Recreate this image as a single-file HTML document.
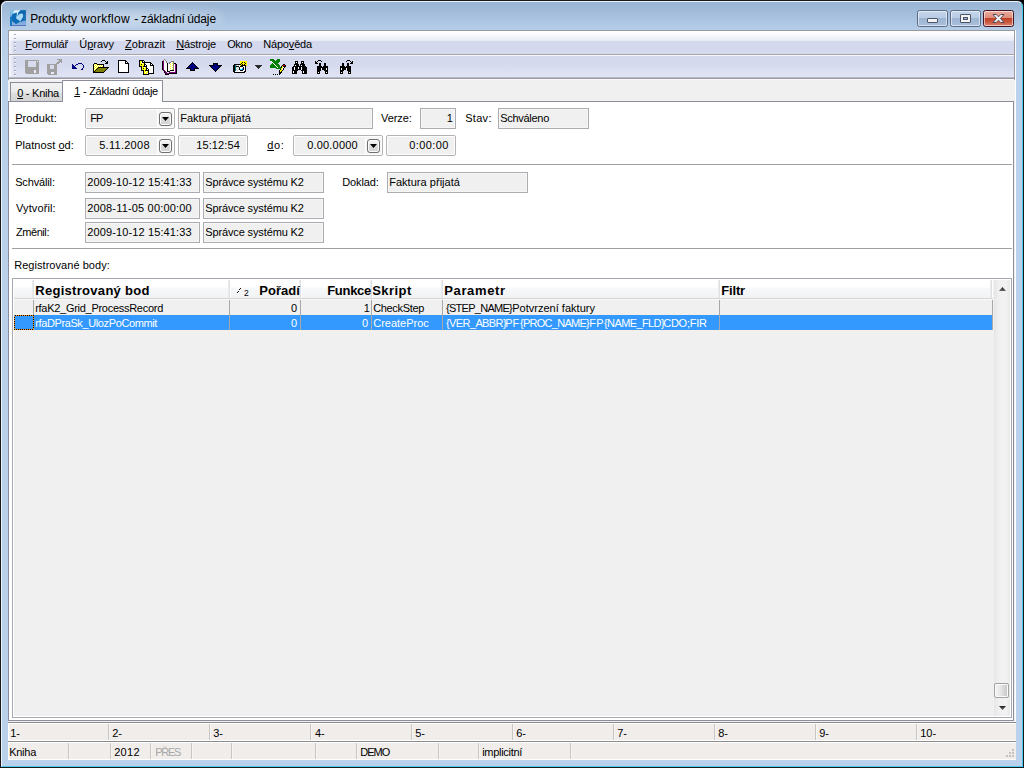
<!DOCTYPE html>
<html lang="cs">
<head>
<meta charset="utf-8">
<title>Produkty workflow - základní údaje</title>
<style>
*{box-sizing:border-box;margin:0;padding:0}
html,body{width:1024px;height:768px;overflow:hidden;background:#000}
body{font-family:"Liberation Sans","DejaVu Sans",sans-serif;font-size:11px;color:#000;position:relative}
#root{position:absolute;left:0;top:0;width:1024px;height:768px;overflow:hidden}
#root div,#root svg,#root span.a{position:absolute}
.t{white-space:pre;line-height:14px;height:14px}
.tg{left:0;top:0}
#root span.t{position:absolute}
u{text-decoration:underline;text-underline-offset:1px}
#frame{left:0;top:0;width:1024px;height:768px;border:1px solid #1a1a1a;border-radius:7px 7px 0 0;background:linear-gradient(#99b4d3 0,#a3bddb 12px,#b6cee9 30px,#b9d1ea 70px)}
#frame2{left:1px;top:1px;width:1022px;height:766px;border:1px solid #eaf2fa;border-right-color:#45cbee;border-bottom-color:#45cbee;border-radius:6px 6px 0 0}
#tglow{left:24px;top:8px;width:200px;height:20px;border-radius:10px;background:radial-gradient(ellipse at center,rgba(255,255,255,.35) 0,rgba(255,255,255,.22) 50%,rgba(255,255,255,0) 100%);filter:blur(2px)}
#client{left:8px;top:30px;width:1008px;height:730px;background:#f0f0f0}
.bar{left:8px;width:1007px;border-left:1px solid #9a9aa6;border-right:1px solid #9a9aa6}
#menubar{top:30px;height:25px;border-top:1px solid #999;border-bottom:1px solid #a6a6a8;background:linear-gradient(#fff 0,#fbfbfe 3px,#e7e9f5 10px,#d5d9ed 10px,#d5d9ed 100%)}
#toolbar{top:55px;height:25px;background:linear-gradient(#f6f7fc 0,#f6f7fc 1px,#d5d9ed 1px,#d6daee 10px,#e1e4f3 22px,#b4b8cc 22px,#b4b8cc 23px,#9b9b9d 23px,#9b9b9d 24px,#fafafa 24px)}
.grip{width:1px}
.g1{left:14px;width:2px;background:repeating-linear-gradient(#a4a8bc 0,#a4a8bc 1px,transparent 1px,transparent 4px)}
.g2{left:15px;background:repeating-linear-gradient(#fff 0,#fff 1px,transparent 1px,transparent 4px)}
.lfade{left:9px;width:5px;background:linear-gradient(90deg,rgba(255,255,255,.85),rgba(255,255,255,0))}
.tab{border:1px solid #8a8e9c;border-bottom:none}
#tab0{left:10px;top:82px;width:53px;height:19px;background:linear-gradient(#f2f2f2 0,#ececec 9px,#dedede 10px,#d4d4d4 100%)}
#tab1{left:62px;top:80px;width:101px;height:22px;background:#fff;border-radius:1px 1px 0 0}
#panel{left:8px;top:101px;width:1006px;height:620px;background:#fff;border:1px solid #8a8e9c}
.sep{left:12px;width:1000px;height:1px;background:#a0a0a0}
.f{height:21px;background:#f0f0f0;border:1px solid #abadb3;box-shadow:inset 0 0 0 1px #f6f6f6}
.fr{border-radius:2px;border-color:#b3b3b3;box-shadow:inset 0 0 0 1px #fff}
.dd{width:13px;height:14px;border:1px solid #707070;border-radius:3px;background:linear-gradient(#f3f3f3 0,#ececec 4px,#dcdcdc 5px,#d2d2d2 100%);box-shadow:inset 0 0 0 1px #fcfcfc}
.dd:after{content:"";position:absolute;left:2px;top:4px;width:7px;height:4px;background:#000;clip-path:polygon(0 0,100% 0,50% 100%)}
.ddbg{background:#f5f5f5;width:15px;height:17px;box-shadow:-1px 0 0 #fff}
#grid{left:12px;top:278px;width:1000px;height:440px;border:1px solid #a6a9b0;background:#fff}
#gin{left:14px;top:280px;width:980px;height:436px;background:#f0f0f0}
#ghead{left:14px;top:279px;width:979px;height:20px;background:linear-gradient(#fff 0,#fff 8px,#f7f8fa 9px,#f1f2f4 100%);border-bottom:1px solid #d5d5d5}
.hs{top:280px;width:3px;height:18px;background:linear-gradient(90deg,#ebecee 0,#ebecee 1px,#dfe0e3 1px,#dfe0e3 2px,#fff 2px)}
.cs{top:300px;width:1px;height:30px;background:#a8a8a8}
#sel{left:33px;top:315px;width:960px;height:15px;background:#3399ff}
#ind{left:14px;top:315px;width:20px;height:15px;background:#3399ff;outline:none}
#vs{left:994px;top:280px;width:16px;height:436px;background:linear-gradient(90deg,#e6e6e6,#f0f0f0 5px,#f2f2f2 12px,#e8e8e8)}
#thumb{left:994px;top:683px;width:15px;height:15px;border:1px solid #a2a2a2;border-radius:2px;background:linear-gradient(90deg,#f5f5f5,#e8e8e8 40%,#c4c4c4);box-shadow:inset 0 0 0 1px #fbfbfb}
.tri-u{width:7px;height:4px;background:linear-gradient(#222,#666);clip-path:polygon(50% 0,100% 100%,0 100%)}
.tri-d{width:7px;height:4px;background:linear-gradient(#222,#666);clip-path:polygon(0 0,100% 0,50% 100%)}
#keys{left:8px;top:722px;width:1008px;height:20px;background:#f0edeb;border-top:1px solid #8b8b8b;border-bottom:1px solid #8b8b8b;box-shadow:inset 0 1px 0 #fff,inset 0 -1px 0 #fff,inset 1px 0 0 #fff}
#status{left:8px;top:742px;width:1008px;height:18px;background:#f0edeb;box-shadow:inset 0 1px 0 #fff,inset 0 -1px 0 #fff,inset 1px 0 0 #fff}
.ks{top:724px;width:2px;height:16px;border-left:1px solid #c8c5c3;background:#f7f5f4}
.ss{top:743px;width:2px;height:16px;border-left:1px solid #c8c5c3;background:#f7f5f4}
.wb{top:10px;height:17px;border:1px solid #5a6c84;border-radius:2.5px;box-shadow:inset 0 0 0 1px rgba(255,255,255,.55);background:linear-gradient(#c3d5ea 0,#b8cce4 7px,#9db5d2 7px,#a9c0dc 100%)}
#bclose{border-color:#431422;background:linear-gradient(#eaab9d 0,#dd8c7b 7px,#c03f24 7px,#c9573f 11px,#dc8570 100%)}
</style>
</head>
<body>
<div id="root">
<div id="frame"></div><div id="frame2"></div>
<svg style="left:10px;top:10px" width="16" height="16" viewBox="0 0 16 16">
<defs><linearGradient id="ig" x1="0" y1="0" x2="1" y2="1"><stop offset="0" stop-color="#9fd2f0"/><stop offset=".35" stop-color="#5aa8dc"/><stop offset="1" stop-color="#0a5ea8"/></linearGradient>
<linearGradient id="ib" x1="0" y1="0" x2="0" y2="1"><stop offset="0" stop-color="#6fa8dc"/><stop offset=".75" stop-color="#8eaee0"/><stop offset="1" stop-color="#3f58a6"/></linearGradient>
<filter id="bl"><feGaussianBlur stdDeviation=".35"/></filter></defs>
<rect width="16" height="16" fill="url(#ig)"/>
<g filter="url(#bl)">
<path d="M4.5 0 H10.5 L8.2 2.6 L7.4 5.2 L6.6 2.6 L3 3.2 Z" fill="#e6f3fc"/>
<path d="M0 7.5 L2 6 L2 16 L0 16 Z" fill="#1478c0"/>
<path d="M2 4.6 L6.6 2.6 L6.8 6 L6.2 8.4 L10.2 11.6 L6 14.2 L2 11 Z" fill="#0d6cb4"/>
<path d="M8.2 2.7 L11 .2 H16 V10.4 L11 12 L10 11.2 L13 7 L13 4 L11 3.5 L8.6 5.2 Z" fill="#0766ae"/>
<path d="M6.8 5 L8.2 6 L9 4.6 L11 3.5 L13 4 L13 7 L10.4 11.2 L6.2 8.4 Z" fill="#a9d9f5"/>
<path d="M2 11 L6 14.2 L10.2 11.8 L16 10.4 V16 H2 Z" fill="url(#ib)"/>
</g>
<rect x="0" y="0" width="16" height="16" fill="none" stroke="#2a78c0" stroke-opacity=".35" stroke-width="1"/>
</svg>
<div id="tglow"></div>
<div class="tg" id="title"><span class="t" style="top:12.34px;left:30.20px;font-size:12px;line-height:15px;height:15px;letter-spacing:-0.07px;">Produkty</span> <span class="t" style="top:12.34px;left:81.00px;font-size:12px;line-height:15px;height:15px;letter-spacing:0.289px;">workflow</span> <span class="t" style="top:12.34px;left:134.20px;font-size:12px;line-height:15px;height:15px;">-</span> <span class="t" style="top:12.34px;left:141.00px;font-size:12px;line-height:15px;height:15px;letter-spacing:-0.113px;">základní</span> <span class="t" style="top:12.34px;left:187.20px;font-size:12px;line-height:15px;height:15px;letter-spacing:-0.115px;">údaje</span></div>
<div class="wb" style="left:917px;width:31px"></div><div class="wb" style="left:950px;width:31px"></div><div class="wb" id="bclose" style="left:983px;width:31px"></div>
<div style="left:927px;top:18px;width:11px;height:5px;border:1px solid #4a5568;border-radius:1px;background:#f4f4f4"></div>
<div style="left:960px;top:14px;width:11px;height:9px;border:1px solid #4a5568;border-radius:1px;background:#f4f4f4"></div><div style="left:963px;top:17px;width:5px;height:3px;border:1px solid #4a5568;background:#9fb6d3"></div>
<svg style="left:991px;top:13px" width="15" height="12" viewBox="0 0 15 12"><path d="M2 1.5 H5.2 L7.5 3.8 L9.8 1.5 H13 L9.4 5.5 L13 9.5 H9.8 L7.5 7.2 L5.2 9.5 H2 L5.6 5.5 Z" fill="#fafafa" stroke="#4a4a5a" stroke-width="1" stroke-linejoin="round"/></svg>
<div id="client"></div>
<div style="left:1015px;top:30px;width:1px;height:730px;background:#fff"></div>
<div class="bar" id="menubar"></div><div class="bar" id="toolbar"></div>
<div class="lfade" style="top:31px;height:23px"></div><div class="lfade" style="top:56px;height:21px"></div>
<div class="grip g1" style="top:34px;height:20px"></div><div class="grip g2" style="top:35px;height:20px"></div><div class="grip g1" style="top:58px;height:20px"></div><div class="grip g2" style="top:59px;height:19px"></div>
<div class="t" style="top:37.19px;left:25.20px;letter-spacing:-0.152px;"><u>F</u>ormulář</div>
<div class="t" style="top:37.19px;left:79.20px;letter-spacing:-0.007px;">Ú<u>p</u>ravy</div>
<div class="t" style="top:37.19px;left:125.00px;letter-spacing:0.031px;"><u>Z</u>obrazit</div>
<div class="t" style="top:37.19px;left:176.20px;letter-spacing:-0.146px;"><u>N</u>ástroje</div>
<div class="t" style="top:37.19px;left:227.20px;letter-spacing:-0.374px;">Okno</div>
<div class="t" style="top:37.19px;left:263.20px;letter-spacing:-0.17px;">Nápo<u>v</u>ěda</div>
<svg style="left:20px;top:56px" width="340" height="22" viewBox="20 56 340 22" shape-rendering="crispEdges"><path fill="#a0a0a0" d="M25 60h14v1h-14zM25 61h3v1h-3zM36 61h1v1h-1zM38 61h1v1h-1zM25 62h3v1h-3zM36 62h3v1h-3zM25 63h3v1h-3zM36 63h3v1h-3zM25 64h3v1h-3zM36 64h3v1h-3zM25 65h3v1h-3zM36 65h3v1h-3zM25 66h3v1h-3zM36 66h3v1h-3zM25 67h14v1h-14zM25 68h14v1h-14zM25 69h14v1h-14zM25 70h9v1h-9zM36 70h3v1h-3zM25 71h9v1h-9zM36 71h3v1h-3zM25 72h9v1h-9zM36 72h3v1h-3zM26 73h13v1h-13zM47 64h10v1h-10zM47 65h3v1h-3zM54 65h3v1h-3zM47 66h3v1h-3zM54 66h3v1h-3zM47 67h3v1h-3zM54 67h3v1h-3zM47 68h3v1h-3zM54 68h3v1h-3zM47 69h10v1h-10zM47 70h10v1h-10zM47 71h10v1h-10zM47 72h4v1h-4zM54 72h3v1h-3zM47 73h4v1h-4zM54 73h3v1h-3zM48 74h9v1h-9zM57 59h5v1h-5zM59 60h3v1h-3zM58 61h4v1h-4zM57 62h3v1h-3zM61 62h1v1h-1zM56 63h3v1h-3z"/><path fill="#d6dbee" d="M28 61h8v1h-8zM28 62h8v1h-8zM28 63h8v1h-8zM28 64h8v1h-8zM28 65h8v1h-8zM28 66h8v1h-8zM50 65h4v1h-4zM50 66h4v1h-4zM50 67h4v1h-4zM50 68h4v1h-4z"/><path fill="#fff" d="M37 61h1v1h-1zM95 64h1v1h-1zM94 65h1v1h-1zM96 65h1v1h-1zM98 65h1v1h-1zM100 65h1v1h-1zM102 65h1v1h-1zM95 66h1v1h-1zM97 66h1v1h-1zM99 66h1v1h-1zM101 66h1v1h-1zM94 67h1v1h-1zM96 67h1v1h-1zM95 68h1v1h-1zM94 69h1v1h-1zM119 61h6v1h-6zM119 62h6v1h-6zM126 62h1v1h-1zM119 63h6v1h-6zM119 64h9v1h-9zM119 65h9v1h-9zM119 66h9v1h-9zM119 67h9v1h-9zM119 68h9v1h-9zM119 69h9v1h-9zM119 70h9v1h-9zM119 71h9v1h-9zM145 63h5v1h-5zM145 64h5v1h-5zM151 64h1v1h-1zM145 65h5v1h-5zM145 66h8v1h-8zM145 67h8v1h-8zM145 68h8v1h-8zM145 69h8v1h-8zM145 70h8v1h-8zM145 71h8v1h-8zM145 72h8v1h-8zM143 61h1v1h-1zM141 62h1v1h-1zM142 63h1v1h-1zM141 64h1v1h-1zM143 65h1v1h-1zM145 65h1v1h-1zM143 66h1v1h-1zM144 67h1v1h-1zM143 68h1v1h-1zM145 69h1v1h-1zM147 69h1v1h-1zM145 70h1v1h-1zM146 71h1v1h-1zM145 72h1v1h-1zM147 73h1v1h-1zM164 60h1v1h-1zM164 61h2v1h-2zM164 62h2v1h-2zM171 62h2v1h-2zM164 63h3v1h-3zM170 63h2v1h-2zM164 64h3v1h-3zM168 64h2v1h-2zM171 64h2v1h-2zM174 64h1v1h-1zM164 65h3v1h-3zM168 65h4v1h-4zM174 65h1v1h-1zM164 66h3v1h-3zM168 66h2v1h-2zM171 66h2v1h-2zM174 66h1v1h-1zM164 67h3v1h-3zM168 67h4v1h-4zM174 67h1v1h-1zM164 68h3v1h-3zM168 68h2v1h-2zM171 68h2v1h-2zM174 68h1v1h-1zM164 69h3v1h-3zM168 69h4v1h-4zM174 69h1v1h-1zM165 70h2v1h-2zM168 70h2v1h-2zM174 70h1v1h-1zM166 71h1v1h-1zM170 71h5v1h-5zM167 72h2v1h-2zM237 65h1v1h-1zM239 65h1v1h-1zM239 66h1v1h-1zM243 66h2v1h-2zM237 67h1v1h-1zM240 67h3v1h-3zM244 67h1v1h-1zM236 68h1v1h-1zM238 68h1v1h-1zM240 68h2v1h-2zM244 68h1v1h-1zM237 69h1v1h-1zM244 69h1v1h-1zM236 70h1v1h-1zM238 70h2v1h-2zM243 70h2v1h-2zM235 71h9v1h-9zM271 61h1v1h-1zM272 62h1v1h-1zM273 63h1v1h-1zM274 64h1v1h-1zM275 65h1v1h-1zM276 66h1v1h-1zM277 67h1v1h-1zM283 67h1v1h-1zM282 68h1v1h-1zM282 69h1v1h-1zM296 62h1v1h-1zM302 62h1v1h-1zM295 65h1v1h-1zM301 65h1v1h-1zM294 67h1v1h-1zM298 67h1v1h-1zM301 67h1v1h-1zM294 68h1v1h-1zM298 68h1v1h-1zM301 68h1v1h-1zM294 69h1v1h-1zM301 69h1v1h-1zM293 71h1v1h-1zM303 71h1v1h-1zM293 72h1v1h-1zM303 72h1v1h-1zM321 68h1v1h-1zM326 68h1v1h-1zM321 69h1v1h-1zM326 69h1v1h-1zM318 72h1v1h-1zM326 72h1v1h-1zM341 68h1v1h-1zM346 68h1v1h-1zM341 69h1v1h-1zM346 69h1v1h-1zM341 72h1v1h-1zM349 72h1v1h-1z"/><path fill="#e9ecf8" d="M34 70h2v1h-2zM34 71h2v1h-2zM34 72h2v1h-2zM51 72h3v1h-3zM51 73h3v1h-3z"/><path fill="#000080" d="M78 63h4v1h-4zM72 64h1v1h-1zM76 64h2v1h-2zM82 64h1v1h-1zM72 65h2v1h-2zM75 65h1v1h-1zM83 65h1v1h-1zM72 66h3v1h-3zM83 66h1v1h-1zM72 67h4v1h-4zM83 67h1v1h-1zM72 68h5v1h-5zM82 68h1v1h-1zM81 69h2v1h-2zM192 63h1v1h-1zM191 64h3v1h-3zM190 65h5v1h-5zM189 66h7v1h-7zM188 67h9v1h-9zM191 68h3v1h-3zM191 69h3v1h-3zM214 64h3v1h-3zM214 65h3v1h-3zM211 66h9v1h-9zM212 67h7v1h-7zM213 68h5v1h-5zM214 69h3v1h-3zM215 70h1v1h-1z"/><path fill="#000" d="M102 60h3v1h-3zM101 61h1v1h-1zM105 61h1v1h-1zM107 61h1v1h-1zM106 62h2v1h-2zM94 63h3v1h-3zM105 63h3v1h-3zM93 64h1v1h-1zM97 64h7v1h-7zM93 65h1v1h-1zM103 65h1v1h-1zM93 66h1v1h-1zM103 66h1v1h-1zM93 67h1v1h-1zM98 67h11v1h-11zM93 68h1v1h-1zM97 68h1v1h-1zM107 68h1v1h-1zM93 69h1v1h-1zM96 69h1v1h-1zM106 69h1v1h-1zM93 70h1v1h-1zM95 70h1v1h-1zM105 70h1v1h-1zM93 71h2v1h-2zM104 71h1v1h-1zM93 72h11v1h-11zM118 60h8v1h-8zM118 61h1v1h-1zM125 61h2v1h-2zM118 62h1v1h-1zM125 62h1v1h-1zM127 62h1v1h-1zM118 63h1v1h-1zM125 63h4v1h-4zM118 64h1v1h-1zM128 64h1v1h-1zM118 65h1v1h-1zM128 65h1v1h-1zM118 66h1v1h-1zM128 66h1v1h-1zM118 67h1v1h-1zM128 67h1v1h-1zM118 68h1v1h-1zM128 68h1v1h-1zM118 69h1v1h-1zM128 69h1v1h-1zM118 70h1v1h-1zM128 70h1v1h-1zM118 71h1v1h-1zM128 71h1v1h-1zM118 72h11v1h-11zM145 62h6v1h-6zM150 63h2v1h-2zM150 64h1v1h-1zM152 64h1v1h-1zM150 65h4v1h-4zM153 66h1v1h-1zM153 67h1v1h-1zM153 68h1v1h-1zM153 69h1v1h-1zM153 70h1v1h-1zM153 71h1v1h-1zM153 72h1v1h-1zM148 73h6v1h-6zM139 60h5v1h-5zM139 61h1v1h-1zM142 61h1v1h-1zM144 61h1v1h-1zM139 62h1v1h-1zM142 62h3v1h-3zM139 63h1v1h-1zM144 63h1v1h-1zM139 64h1v1h-1zM144 64h1v1h-1zM139 65h1v1h-1zM144 65h1v1h-1zM139 66h6v1h-6zM141 64h5v1h-5zM141 65h1v1h-1zM144 65h1v1h-1zM146 65h1v1h-1zM141 66h1v1h-1zM144 66h3v1h-3zM141 67h1v1h-1zM146 67h1v1h-1zM141 68h1v1h-1zM146 68h1v1h-1zM141 69h1v1h-1zM146 69h1v1h-1zM141 70h6v1h-6zM143 68h5v1h-5zM143 69h1v1h-1zM146 69h1v1h-1zM148 69h1v1h-1zM143 70h1v1h-1zM146 70h3v1h-3zM143 71h1v1h-1zM148 71h1v1h-1zM143 72h1v1h-1zM148 72h1v1h-1zM143 73h1v1h-1zM148 73h1v1h-1zM143 74h6v1h-6zM162 61h1v1h-1zM162 62h1v1h-1zM162 63h1v1h-1zM167 63h1v1h-1zM174 63h2v1h-2zM162 64h1v1h-1zM167 64h1v1h-1zM176 64h1v1h-1zM162 65h1v1h-1zM167 65h1v1h-1zM176 65h1v1h-1zM162 66h1v1h-1zM167 66h1v1h-1zM176 66h1v1h-1zM162 67h1v1h-1zM167 67h1v1h-1zM176 67h1v1h-1zM162 68h1v1h-1zM167 68h1v1h-1zM176 68h1v1h-1zM162 69h1v1h-1zM167 69h1v1h-1zM176 69h1v1h-1zM163 70h1v1h-1zM167 70h1v1h-1zM170 70h4v1h-4zM176 70h1v1h-1zM164 71h1v1h-1zM167 71h3v1h-3zM176 71h1v1h-1zM164 72h1v1h-1zM176 72h1v1h-1zM165 73h1v1h-1zM169 73h8v1h-8zM165 74h4v1h-4zM192 62h1v1h-1zM191 63h1v1h-1zM193 63h1v1h-1zM190 64h1v1h-1zM194 64h1v1h-1zM189 65h1v1h-1zM195 65h1v1h-1zM188 66h1v1h-1zM196 66h1v1h-1zM187 67h1v1h-1zM197 67h1v1h-1zM186 68h5v1h-5zM194 68h5v1h-5zM190 69h1v1h-1zM194 69h1v1h-1zM190 70h5v1h-5zM213 63h5v1h-5zM213 64h1v1h-1zM217 64h1v1h-1zM209 65h5v1h-5zM217 65h5v1h-5zM210 66h1v1h-1zM220 66h1v1h-1zM211 67h1v1h-1zM219 67h1v1h-1zM212 68h1v1h-1zM218 68h1v1h-1zM213 69h1v1h-1zM217 69h1v1h-1zM214 70h1v1h-1zM216 70h1v1h-1zM215 71h1v1h-1zM242 62h1v1h-1zM244 62h1v1h-1zM241 63h1v1h-1zM245 63h1v1h-1zM234 64h7v1h-7zM242 64h1v1h-1zM244 64h1v1h-1zM233 65h2v1h-2zM241 65h5v1h-5zM233 66h2v1h-2zM236 66h3v1h-3zM240 66h3v1h-3zM245 66h1v1h-1zM233 67h2v1h-2zM239 67h1v1h-1zM243 67h1v1h-1zM245 67h1v1h-1zM233 68h2v1h-2zM239 68h1v1h-1zM243 68h1v1h-1zM245 68h1v1h-1zM233 69h2v1h-2zM239 69h1v1h-1zM243 69h1v1h-1zM245 69h1v1h-1zM233 70h2v1h-2zM240 70h3v1h-3zM245 70h1v1h-1zM233 71h2v1h-2zM244 71h2v1h-2zM234 72h11v1h-11zM283 64h2v1h-2zM282 65h1v1h-1zM285 65h1v1h-1zM281 66h1v1h-1zM283 66h3v1h-3zM281 67h1v1h-1zM284 67h1v1h-1zM280 68h1v1h-1zM283 68h1v1h-1zM280 69h1v1h-1zM283 69h1v1h-1zM279 70h1v1h-1zM282 70h1v1h-1zM279 71h1v1h-1zM281 71h1v1h-1zM279 72h3v1h-3zM279 73h2v1h-2zM273 74h1v1h-1zM275 74h1v1h-1zM277 74h1v1h-1zM279 74h1v1h-1zM295 61h3v1h-3zM301 61h3v1h-3zM295 62h1v1h-1zM297 62h1v1h-1zM301 62h1v1h-1zM303 62h1v1h-1zM295 63h3v1h-3zM301 63h3v1h-3zM294 64h5v1h-5zM300 64h5v1h-5zM294 65h1v1h-1zM296 65h3v1h-3zM300 65h1v1h-1zM302 65h3v1h-3zM293 66h13v1h-13zM292 67h2v1h-2zM295 67h3v1h-3zM299 67h2v1h-2zM302 67h5v1h-5zM292 68h2v1h-2zM295 68h3v1h-3zM299 68h2v1h-2zM302 68h5v1h-5zM292 69h2v1h-2zM295 69h6v1h-6zM302 69h5v1h-5zM292 70h6v1h-6zM301 70h6v1h-6zM292 71h1v1h-1zM294 71h3v1h-3zM302 71h1v1h-1zM304 71h3v1h-3zM292 72h1v1h-1zM294 72h3v1h-3zM302 72h1v1h-1zM304 72h3v1h-3zM292 73h5v1h-5zM302 73h5v1h-5zM319 63h2v1h-2zM324 63h2v1h-2zM319 64h2v1h-2zM324 64h2v1h-2zM319 65h2v1h-2zM324 65h2v1h-2zM317 66h5v1h-5zM323 66h5v1h-5zM317 67h11v1h-11zM317 68h4v1h-4zM322 68h4v1h-4zM327 68h1v1h-1zM317 69h4v1h-4zM322 69h4v1h-4zM327 69h1v1h-1zM317 70h4v1h-4zM324 70h4v1h-4zM317 71h3v1h-3zM325 71h3v1h-3zM317 72h1v1h-1zM319 72h1v1h-1zM325 72h1v1h-1zM327 72h1v1h-1zM317 73h3v1h-3zM325 73h3v1h-3zM318 60h3v1h-3zM315 61h1v1h-1zM317 61h1v1h-1zM321 61h1v1h-1zM315 62h2v1h-2zM315 63h3v1h-3zM342 63h2v1h-2zM347 63h2v1h-2zM342 64h2v1h-2zM347 64h2v1h-2zM342 65h2v1h-2zM347 65h2v1h-2zM340 66h5v1h-5zM346 66h5v1h-5zM340 67h11v1h-11zM340 68h1v1h-1zM342 68h4v1h-4zM347 68h4v1h-4zM340 69h1v1h-1zM342 69h4v1h-4zM347 69h4v1h-4zM340 70h4v1h-4zM347 70h4v1h-4zM340 71h3v1h-3zM348 71h3v1h-3zM340 72h1v1h-1zM342 72h1v1h-1zM348 72h1v1h-1zM350 72h1v1h-1zM340 73h3v1h-3zM348 73h3v1h-3zM347 60h3v1h-3zM346 61h1v1h-1zM350 61h1v1h-1zM352 61h1v1h-1zM351 62h2v1h-2zM350 63h3v1h-3z"/><path fill="#ffff00" d="M94 64h1v1h-1zM96 64h1v1h-1zM95 65h1v1h-1zM97 65h1v1h-1zM99 65h1v1h-1zM101 65h1v1h-1zM94 66h1v1h-1zM96 66h1v1h-1zM98 66h1v1h-1zM100 66h1v1h-1zM102 66h1v1h-1zM95 67h1v1h-1zM97 67h1v1h-1zM94 68h1v1h-1zM96 68h1v1h-1zM95 69h1v1h-1zM94 70h1v1h-1zM140 61h2v1h-2zM140 62h1v1h-1zM140 63h2v1h-2zM143 63h1v1h-1zM140 64h1v1h-1zM142 64h2v1h-2zM140 65h3v1h-3zM142 65h2v1h-2zM142 66h1v1h-1zM142 67h2v1h-2zM145 67h1v1h-1zM142 68h1v1h-1zM144 68h2v1h-2zM142 69h3v1h-3zM144 69h2v1h-2zM144 70h1v1h-1zM144 71h2v1h-2zM147 71h1v1h-1zM144 72h1v1h-1zM146 72h2v1h-2zM144 73h3v1h-3zM172 63h1v1h-1zM170 64h1v1h-1zM172 65h1v1h-1zM170 66h1v1h-1zM172 67h1v1h-1zM170 68h1v1h-1zM172 69h1v1h-1zM240 61h7v1h-7zM240 62h2v1h-2zM243 62h1v1h-1zM245 62h2v1h-2zM240 63h1v1h-1zM242 63h3v1h-3zM246 63h1v1h-1zM241 64h1v1h-1zM243 64h1v1h-1zM245 64h2v1h-2zM240 65h1v1h-1zM246 65h1v1h-1zM282 66h1v1h-1zM282 67h1v1h-1zM281 68h1v1h-1zM281 69h1v1h-1zM280 70h2v1h-2zM280 71h1v1h-1z"/><path fill="#808000" d="M98 68h9v1h-9zM97 69h9v1h-9zM96 70h9v1h-9zM95 71h9v1h-9z"/><path fill="#808080" d="M164 59h1v1h-1zM163 60h1v1h-1zM165 60h1v1h-1zM166 61h1v1h-1zM171 61h3v1h-3zM166 62h1v1h-1zM169 62h2v1h-2zM173 62h1v1h-1zM169 63h1v1h-1zM173 63h1v1h-1zM173 64h1v1h-1zM173 65h1v1h-1zM173 66h1v1h-1zM173 67h1v1h-1zM173 68h1v1h-1zM173 69h1v1h-1z"/><path fill="#800080" d="M163 61h1v1h-1zM163 62h1v1h-1zM163 63h1v1h-1zM163 64h1v1h-1zM175 64h1v1h-1zM163 65h1v1h-1zM175 65h1v1h-1zM163 66h1v1h-1zM175 66h1v1h-1zM163 67h1v1h-1zM175 67h1v1h-1zM163 68h1v1h-1zM175 68h1v1h-1zM163 69h1v1h-1zM175 69h1v1h-1zM164 70h1v1h-1zM175 70h1v1h-1zM165 71h1v1h-1zM175 71h1v1h-1zM165 72h2v1h-2zM169 72h7v1h-7zM166 73h3v1h-3z"/><path fill="#008080" d="M235 65h1v1h-1zM235 66h1v1h-1zM235 67h1v1h-1zM235 68h1v1h-1zM235 69h1v1h-1zM235 70h1v1h-1z"/><path fill="#c8c8c8" d="M236 65h1v1h-1zM238 65h1v1h-1zM236 67h1v1h-1zM238 67h1v1h-1zM237 68h1v1h-1zM236 69h1v1h-1zM238 69h1v1h-1zM237 70h1v1h-1z"/><path fill="#00e0ff" d="M242 68h1v1h-1zM240 69h2v1h-2z"/><path fill="#0040ff" d="M242 69h1v1h-1z"/><path fill="#2a2a2a" d="M255 65h7v1h-7zM256 66h5v1h-5zM257 67h3v1h-3zM258 68h1v1h-1z"/><path fill="#008000" d="M270 59h4v1h-4zM277 59h3v1h-3zM270 60h5v1h-5zM276 60h4v1h-4zM272 61h8v1h-8zM273 62h6v1h-6zM272 63h1v1h-1zM274 63h4v1h-4zM271 64h3v1h-3zM275 64h4v1h-4zM270 65h5v1h-5zM276 65h4v1h-4zM270 66h6v1h-6zM277 66h3v1h-3zM270 67h7v1h-7zM278 67h3v1h-3zM276 68h5v1h-5z"/><path fill="#c00000" d="M283 65h2v1h-2z"/></svg>
<div id="panel"></div>
<div class="tab" id="tab0"></div><div class="tab" id="tab1"></div>
<div class="t" style="top:86.19px;left:17.20px;letter-spacing:-0.248px;"><u>0</u> - Kniha</div>
<div class="t" style="top:84.19px;left:74.20px;letter-spacing:-0.237px;"><u>1</u> - Základní údaje</div>
<div class="t" style="top:111.19px;left:15.20px;letter-spacing:0.079px;"><u>P</u>rodukt:</div>
<div class="f fr" style="left:85px;top:108px;width:90px"></div><div class="ddbg" style="left:158px;top:110px"></div><div class="dd" style="left:159px;top:112px"></div>
<div class="t" style="top:111.19px;left:90.20px;letter-spacing:-1.031px;">FP</div>
<div class="f" style="left:178px;top:108px;width:195px"></div>
<div class="t" style="top:111.19px;left:180.20px;letter-spacing:0.032px;">Faktura přijatá</div>
<div class="t" style="top:111.19px;left:381.00px;letter-spacing:-0.065px;">Verze:</div>
<div class="f" style="left:420px;top:108px;width:36px"></div>
<div class="t" style="top:111.19px;right:571.20px;">1</div>
<div class="t" style="top:111.19px;left:465.20px;letter-spacing:0.304px;">Stav:</div>
<div class="f" style="left:498px;top:108px;width:91px"></div>
<div class="t" style="top:111.19px;left:500.20px;letter-spacing:-0.286px;">Schváleno</div>
<div class="t" style="top:138.19px;left:15.20px;letter-spacing:0.042px;">Platnost <u>o</u>d:</div>
<div class="f fr" style="left:85px;top:135px;width:90px"></div><div class="ddbg" style="left:158px;top:137px"></div><div class="dd" style="left:159px;top:139px"></div>
<div class="t" style="top:138.19px;left:99.20px;letter-spacing:0.275px;">5.11.2008</div>
<div class="f fr" style="left:178px;top:135px;width:70px"></div>
<div class="t" style="top:138.19px;left:196.20px;letter-spacing:0.121px;">15:12:54</div>
<div class="t" style="top:138.19px;left:267.20px;letter-spacing:0.701px;"><u>d</u>o:</div>
<div class="f fr" style="left:293px;top:135px;width:90px"></div><div class="ddbg" style="left:366px;top:137px"></div><div class="dd" style="left:367px;top:139px"></div>
<div class="t" style="top:138.19px;left:307.20px;letter-spacing:0.185px;">0.00.0000</div>
<div class="f fr" style="left:386px;top:135px;width:70px"></div>
<div class="t" style="top:138.19px;left:409.20px;letter-spacing:0.414px;">0:00:00</div>
<div class="sep" style="top:164px"></div>
<div class="t" style="top:175.19px;left:15.20px;letter-spacing:-0.152px;">Schválil:</div>
<div class="f" style="left:85px;top:172px;width:115px"></div><div class="f" style="left:203px;top:172px;width:121px"></div>
<div class="t" style="top:175.19px;left:87.20px;letter-spacing:0.129px;">2009-10-12 15:41:33</div>
<div class="t" style="top:175.19px;left:205.20px;letter-spacing:-0.126px;">Správce systému K2</div>
<div class="t" style="top:201.19px;left:16.00px;letter-spacing:0.12px;">Vytvořil:</div>
<div class="f" style="left:85px;top:198px;width:115px"></div><div class="f" style="left:203px;top:198px;width:121px"></div>
<div class="t" style="top:201.19px;left:87.20px;letter-spacing:0.172px;">2008-11-05 00:00:00</div>
<div class="t" style="top:201.19px;left:205.20px;letter-spacing:-0.126px;">Správce systému K2</div>
<div class="t" style="top:225.19px;left:16.00px;letter-spacing:-0.438px;">Změnil:</div>
<div class="f" style="left:85px;top:222px;width:115px"></div><div class="f" style="left:203px;top:222px;width:121px"></div>
<div class="t" style="top:225.19px;left:87.20px;letter-spacing:0.129px;">2009-10-12 15:41:33</div>
<div class="t" style="top:225.19px;left:205.20px;letter-spacing:-0.126px;">Správce systému K2</div>
<div class="t" style="top:175.19px;left:342.20px;letter-spacing:-0.1px;">Doklad:</div>
<div class="f" style="left:387px;top:172px;width:141px"></div>
<div class="t" style="top:175.19px;left:389.20px;letter-spacing:0.032px;">Faktura přijatá</div>
<div class="sep" style="top:248px"></div>
<div class="t" style="top:258.19px;left:14.20px;letter-spacing:0.045px;">Registrované body:</div>
<div id="grid"></div><div id="gin"></div><div id="ghead"></div>
<div class="hs" style="left:32px"></div>
<div class="hs" style="left:228px"></div>
<div class="hs" style="left:299px"></div>
<div class="hs" style="left:370px"></div>
<div class="hs" style="left:441px"></div>
<div class="hs" style="left:718px"></div>
<div class="hs" style="left:990px"></div>
<div style="left:14px;top:299px;width:980px;height:1px;background:#f9f9f9"></div>
<div id="sel"></div><div id="ind"></div>
<div style="left:14px;top:314px;width:979px;height:1px;background:#f6efe6"></div><div style="left:14px;top:330px;width:979px;height:1px;background:#f6efe6"></div>
<div class="cs" style="left:33px"></div>
<div class="cs" style="left:229px"></div>
<div class="cs" style="left:300px"></div>
<div class="cs" style="left:371px"></div>
<div class="cs" style="left:442px"></div>
<div class="cs" style="left:719px"></div>
<div class="cs" style="left:992px"></div>
<svg style="left:14px;top:315px" width="20" height="15" shape-rendering="crispEdges"><rect x=".5" y=".5" width="19" height="14" fill="none" stroke="#000" stroke-dasharray="1 1"/><rect x=".5" y=".5" width="19" height="14" fill="none" stroke="#ff9a1a" stroke-dasharray="1 1" stroke-dashoffset="1"/></svg>
<div class="t" style="top:282.50px;left:35.20px;font-size:13px;line-height:16px;height:16px;font-weight:700;letter-spacing:0.3px;">Registrovaný bod</div>
<div class="t" style="top:282.50px;left:259.20px;font-size:13px;line-height:16px;height:16px;font-weight:700;letter-spacing:0.055px;">Pořadí</div>
<div class="t" style="top:282.50px;left:327.20px;font-size:13px;line-height:16px;height:16px;font-weight:700;letter-spacing:-0.286px;">Funkce</div>
<div class="t" style="top:282.50px;left:372.20px;font-size:13px;line-height:16px;height:16px;font-weight:700;letter-spacing:0.459px;">Skript</div>
<div class="t" style="top:282.50px;left:444.20px;font-size:13px;line-height:16px;height:16px;font-weight:700;letter-spacing:0.653px;">Parametr</div>
<div class="t" style="top:282.50px;left:721.20px;font-size:13px;line-height:16px;height:16px;font-weight:700;letter-spacing:-0.152px;">Filtr</div>
<svg style="left:236px;top:287px" width="8" height="8" shape-rendering="crispEdges"><path d="M1 5h1v1h-1zM2 4h1v1h-1zM3 2h1v1h-1zM4 1h1v1h-1z" fill="#111"/><path d="M5 2h1v1h-1zM6 4h1v1h-1z" fill="#e6e7ea"/></svg>
<div class="t" style="top:288.30px;left:244.00px;font-size:8.5px;line-height:11.5px;height:11.5px;">2</div>
<div class="t" style="top:301.19px;left:35.20px;letter-spacing:-0.28px;">rfaK2_Grid_ProcessRecord</div>
<div class="t" style="top:301.19px;right:727.00px;">0</div>
<div class="t" style="top:301.19px;right:654.20px;">1</div>
<div class="t" style="top:301.19px;left:373.20px;letter-spacing:-0.335px;">CheckStep</div>
<div class="tg"><span class="t" style="top:301.19px;left:446.00px;letter-spacing:-0.726px;">{STEP_NAME}</span><span class="t" style="top:301.19px;left:512.20px;letter-spacing:0.015px;">Potvrzení faktury</span></div>
<div class="t" style="top:316.19px;left:35.20px;color:#fff;letter-spacing:-0.382px;">rfaDPraSk_UlozPoCommit</div>
<div class="t" style="top:316.19px;right:727.00px;color:#fff;">0</div>
<div class="t" style="top:316.19px;right:656.00px;color:#fff;">0</div>
<div class="t" style="top:316.19px;left:373.20px;color:#fff;letter-spacing:-0.004px;">CreateProc</div>
<div class="tg"><span class="t" style="top:316.19px;left:446.00px;color:#fff;letter-spacing:-0.605px;">{VER_ABBR}</span><span class="t" style="top:316.19px;left:505.20px;color:#fff;letter-spacing:-0.131px;">PF</span><span class="t" style="top:316.19px;left:520.00px;color:#fff;letter-spacing:-0.73px;">{PROC_NAME}</span><span class="t" style="top:316.19px;left:589.20px;color:#fff;letter-spacing:0.269px;">FP</span><span class="t" style="top:316.19px;left:604.00px;color:#fff;letter-spacing:-0.603px;">{NAME_FLD}</span><span class="t" style="top:316.19px;left:663.20px;color:#fff;letter-spacing:-0.233px;">CDO;FIR</span></div>
<div id="vs"></div><div id="thumb"></div><div class="tri-u" style="left:999px;top:287px"></div><div class="tri-d" style="left:999px;top:706px"></div>
<div id="keys"></div><div id="status"></div>
<div class="ks" style="left:108px"></div>
<div class="ks" style="left:209px"></div>
<div class="ks" style="left:310px"></div>
<div class="ks" style="left:411px"></div>
<div class="ks" style="left:512px"></div>
<div class="ks" style="left:613px"></div>
<div class="ks" style="left:714px"></div>
<div class="ks" style="left:815px"></div>
<div class="ks" style="left:916px"></div>
<div class="t" style="top:726.19px;left:10.20px;">1-</div>
<div class="t" style="top:726.19px;left:112.20px;">2-</div>
<div class="t" style="top:726.19px;left:213.20px;">3-</div>
<div class="t" style="top:726.19px;left:315.00px;">4-</div>
<div class="t" style="top:726.19px;left:415.20px;">5-</div>
<div class="t" style="top:726.19px;left:516.20px;">6-</div>
<div class="t" style="top:726.19px;left:617.20px;">7-</div>
<div class="t" style="top:726.19px;left:718.20px;">8-</div>
<div class="t" style="top:726.19px;left:819.20px;">9-</div>
<div class="t" style="top:726.19px;left:920.20px;">10-</div>
<div class="ss" style="left:68px"></div>
<div class="ss" style="left:110px"></div>
<div class="ss" style="left:150px"></div>
<div class="ss" style="left:191px"></div>
<div class="ss" style="left:231px"></div>
<div class="ss" style="left:315px"></div>
<div class="ss" style="left:356px"></div>
<div class="ss" style="left:438px"></div>
<div class="ss" style="left:478px"></div>
<div class="ss" style="left:570px"></div>
<div class="t" style="top:745.19px;left:9.20px;letter-spacing:-0.268px;">Kniha</div>
<div class="t" style="top:745.19px;left:114.20px;letter-spacing:0.279px;">2012</div>
<div class="t" style="top:745.19px;left:155.20px;color:#a8a8a8;letter-spacing:-1.242px;">PŘES</div>
<div class="t" style="top:745.19px;left:360.20px;letter-spacing:-1.0px;">DEMO</div>
<div class="t" style="top:745.19px;left:482.20px;letter-spacing:-0.3px;">implicitní</div>
<svg style="left:1003px;top:748px" width="12" height="12"><g fill="#c6c2bf"><rect x="9" y="1" width="2" height="2"/><rect x="6" y="4" width="2" height="2"/><rect x="9" y="4" width="2" height="2"/><rect x="3" y="7" width="2" height="2"/><rect x="6" y="7" width="2" height="2"/><rect x="9" y="7" width="2" height="2"/></g></svg>
</div>
</body>
</html>
